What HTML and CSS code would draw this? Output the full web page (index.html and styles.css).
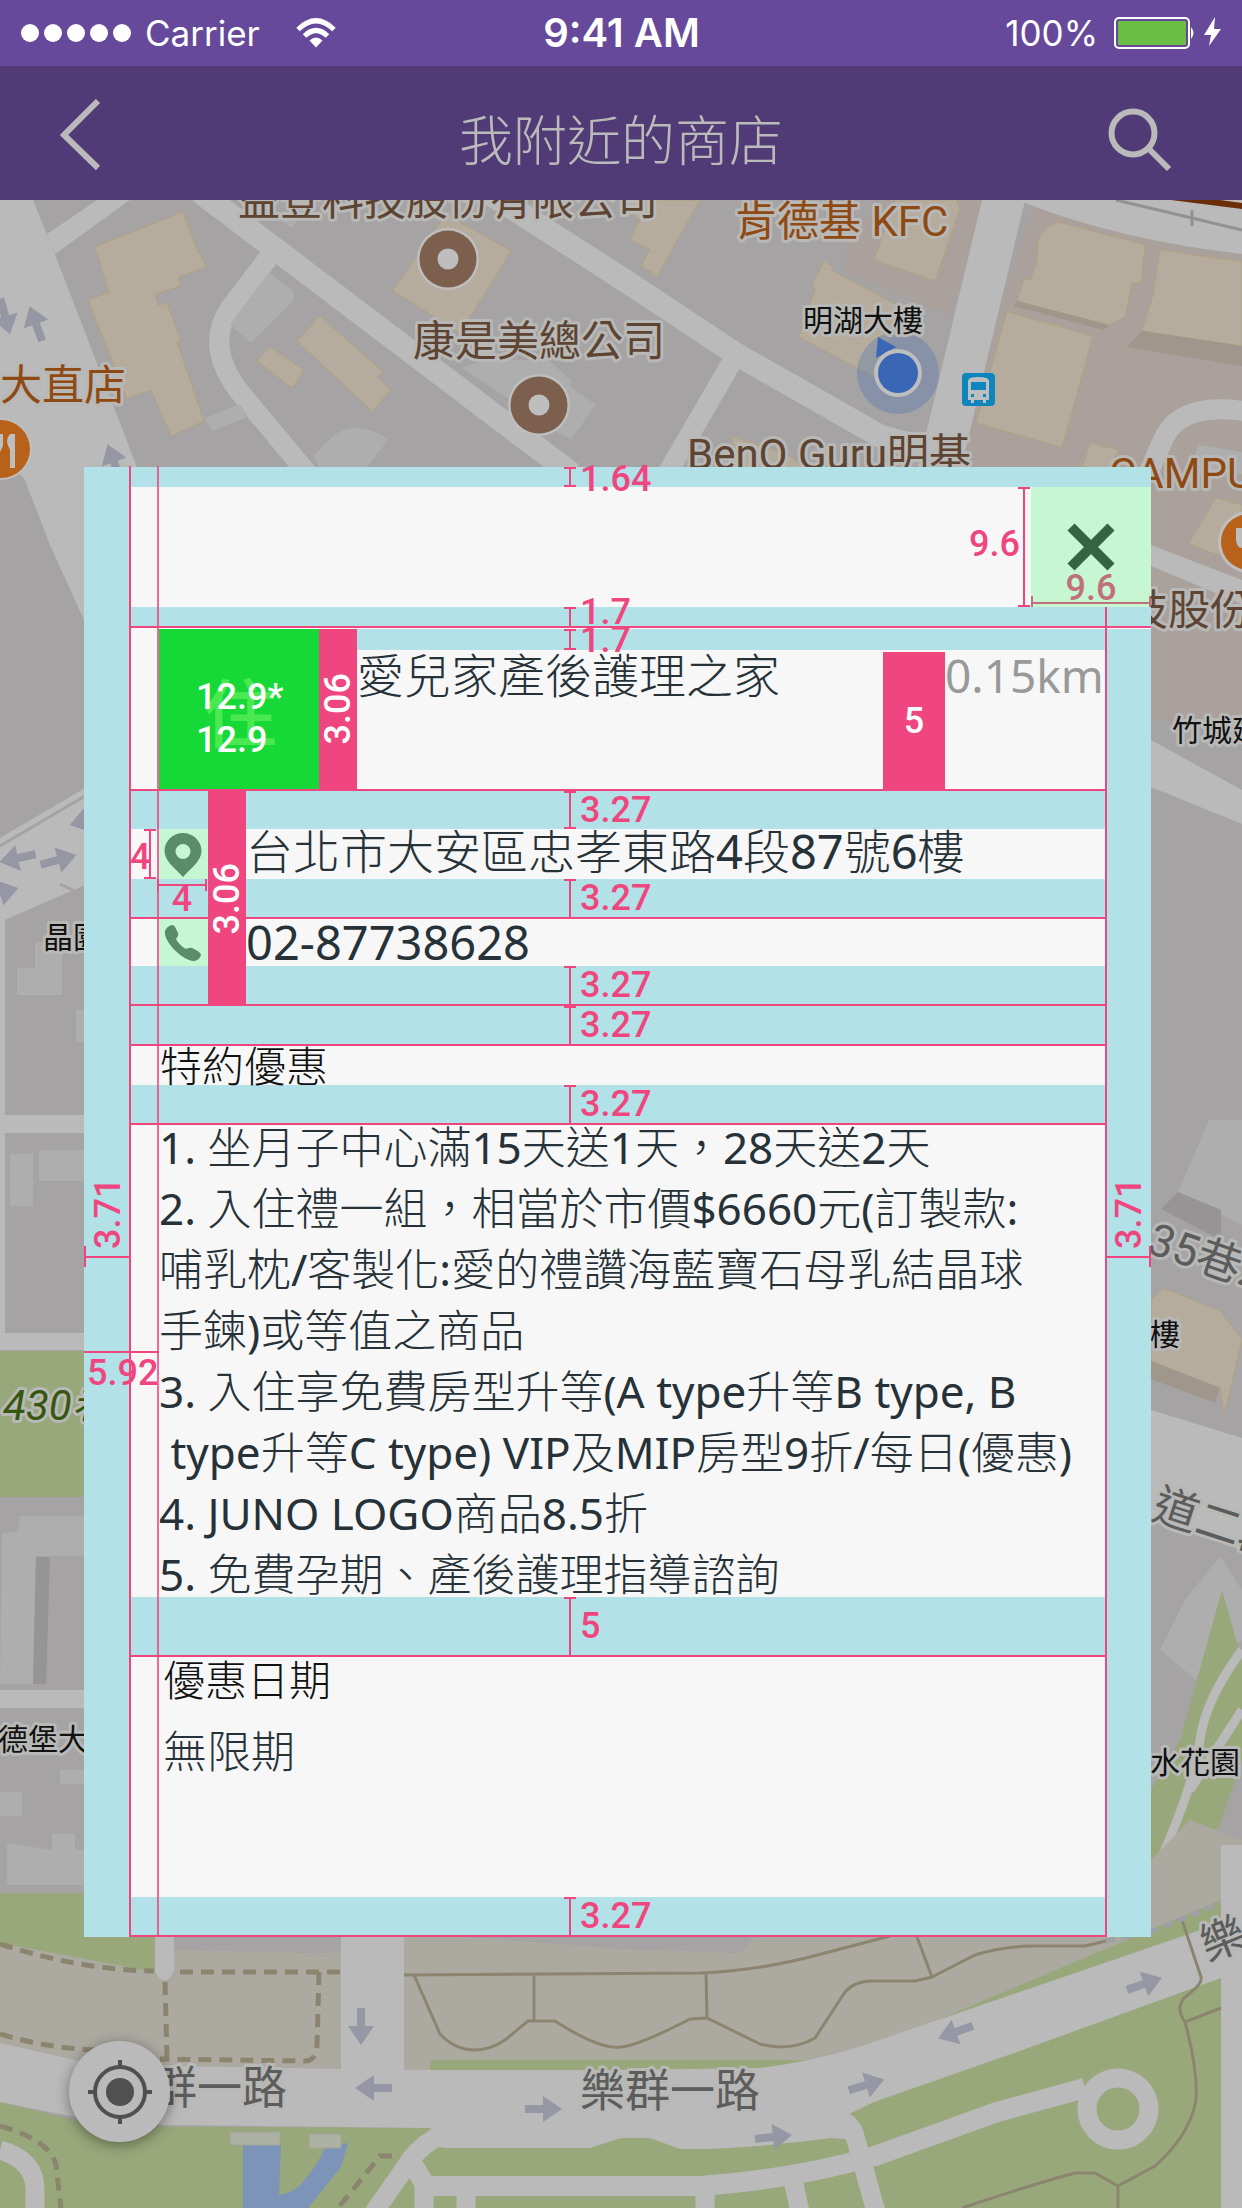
FILE: index.html
```html
<!DOCTYPE html>
<html lang="zh-Hant">
<head>
<meta charset="utf-8">
<meta name="viewport" content="width=device-width, initial-scale=1">
<title>我附近的商店</title>
<link rel="stylesheet" href="styles.css">
</head>
<body>
<div class="status">
  <div class="status-left">
    <span class="dots"><i></i><i></i><i></i><i></i><i></i></span>
    <span>Carrier</span>
    <svg class="wifi" viewBox="0 0 40 30" aria-hidden="true"><g fill="none" stroke="#fff" stroke-width="5"><path d="M2 11.500Q20 -6 38 11.500"/><path d="M8.500 18Q20 7 31.500 18"/></g><path d="M13.500 22.500Q20 16.500 26.500 22.500L20 29.500Z" fill="#fff"/></svg>
  </div>
  <span class="time">9:41 AM</span>
  <div class="status-right">
    <span>100%</span>
    <svg class="battery" viewBox="0 0 108 34" aria-hidden="true"><rect x="1" y="2" width="74" height="30" rx="4" fill="none" stroke="#fff" stroke-width="2"/><rect x="4" y="5" width="68" height="24" rx="1" fill="#6bbd45"/><path d="M77 11q5 6 0 12z" fill="#fff"/><path d="M101 1L90 19h7l-2 11 12-17h-7z" fill="#fff"/></svg>
  </div>
</div>
<header class="topbar">
  <button class="icon-btn back" aria-label="返回"><svg width="42" height="72" viewBox="0 0 42 72"><path d="M38 2L4 36l34 33" fill="none" stroke="#bababa" stroke-width="6"/></svg></button>
  <h1>我附近的商店</h1>
  <button class="icon-btn search" aria-label="搜尋"><svg width="64" height="64" viewBox="0 0 64 64"><circle cx="25" cy="25" r="21.500" fill="none" stroke="#bababa" stroke-width="6"/><path d="M40 40L61 61" stroke="#bababa" stroke-width="6"/></svg></button>
</header>
<main>
  <svg class="map" viewBox="0 200 1242 2008" preserveAspectRatio="xMidYMin slice" aria-hidden="true">
    <defs>
      <path id="arrow" d="M-18 -4H0V-13L19 0L0 13V4H-18Z" fill="#9597a4"/>
      <g id="donut"><circle r="31" fill="#bebebe"/><circle r="28.500" fill="#7d5f4d"/><circle r="10.500" fill="#bebebe"/></g>
    </defs>
    <rect y="200" width="1242" height="2008" fill="#a5a3a4"/>
    <g fill="#aaa19c"><path d="M850 240L880 200H985L950 316L842 270Z"/><path d="M1000 306L1034 205L1242 250V720H1151L1025 467H960Z"/></g>
    <g fill="#bababa">
      <path d="M0 200H33L54 252L137 467L150 620H84L50 545L24 478L0 455Z"/>
      <path d="M47 234L97 200H130L55 254Z"/>
      <path d="M1020 200H1242V254Q1120 240 1025 203Z"/>
      <path d="M0 838L85 788V885L0 922Z"/>
      <path d="M0 920H5V1333H0ZM0 1115H85V1133H0ZM0 1333H85V1350H0ZM0 1690H85V1708H0Z"/>
      <path d="M1151 545L1242 580V604L1151 566ZM1151 740L1242 790V824L1151 787Z"/>
      <path d="M1151 1410L1242 1438V1550L1151 1520Z"/>
    </g>
    <path d="M0 846L85 796M60 884L85 896" fill="none" stroke="#a5a3a4" stroke-width="3"/>
    <g fill="none" stroke="#bababa" stroke-width="23">
      <path d="M200 192L572 474"/>
      <path d="M269 257L230 308Q205 345 238 390L308 474" stroke-width="20"/>
      <path d="M484 190L621 278L736 354L880 436Q910 445 940 450"/>
      <path d="M736 355L667 474" stroke-width="20"/>
      <path d="M1006 190L938 474" stroke-width="42"/>
      <path d="M1250 412Q1180 400 1163 440L1148 474" stroke-width="20"/>
    </g>
    <path d="M1171 200L1242 209V203L1220 200Z" fill="#6b2e08"/>
    <path d="M1116 200L1192 218L1242 230M1192 210V226" fill="none" stroke="#929292" stroke-width="3"/>
    <!-- plain buildings -->
    <g fill="#aeaeae">
      <path d="M269 272L294 292V300L251 343L230 325Z"/><path d="M205 418L240 404L248 417L212 431Z"/>
      <path d="M314 456Q335 430 350 428Q372 426 388 440L362 474H322Z"/>
      <path d="M462 368L485 360H548L571 380V387L596 405L571 439L545 425L528 412Z"/>
      <path d="M273 215H300L292 228ZM1198 445L1242 452V474H1190Z"/>
      <path d="M17 968H35V942H50V952H62V995H17ZM76 1010H85V1042H76Z"/>
      <path d="M10 1154H33V1206H10ZM39 1150H85V1181H39Z"/>
      <path d="M2 1533L18 1532L20 1516H85V1556H36L33 1684H0Z"/>
      <path d="M0 1792H22V1816H0ZM7 1843L52 1850V1834H75V1850H85V1885H7ZM60 1770H85V1784H60Z"/>
      <path d="M1209 1120H1242V1225L1178 1192Z"/><path d="M1185 1600L1220 1556L1242 1590V1640L1196 1680L1160 1650Z"/>
    </g>
    <g fill="#969494"><path d="M1178 1192L1221 1210V1240L1161 1209Z"/><path d="M36 1557H50L46 1684H33Z"/></g>
    <!-- highlighted buildings -->
    <g fill="#b5ac9d" stroke="#b3a27f" stroke-width="1">
      <path d="M95 247L183 212L198 253L201 256L206 267L178 277L181 286L155 294L158 305L167 303L181 341L177 342L204 421L171 436L151 390L127 399L88 300L109 292Z"/>
      <path d="M320 316L383 372L377 377L391 390L372 411L297 341Z"/><path d="M270 347L304 370L292 388L257 361Z"/>
      <path d="M446 214L511 251L460 333L393 291Z"/>
      <path d="M621 206L640 220L630 239L650 250L641 266L657 276L700 200H621Z"/>
      <path d="M895 200H956L960 208L935 281L874 260Z"/>
      <path d="M824 261L833 267L831 270L903 308L874 377L799 337L815 290L812 285Z"/>
      <path d="M1058 222L1145 245L1141 282L1132 283L1125 317L1109 325L1017 301L1024 279L1031 280L1037 261L1038 240Q1045 226 1058 222Z"/>
      <path d="M1160 250L1242 262V346L1142 331L1153 295Z"/>
      <path d="M1007 312L1093 336L1062 447L976 423Z"/>
      <path d="M731 436L790 456L810 474H742Z"/>
      <path d="M1090 443L1118 450L1108 474H1080Z"/>
      <path d="M1216 498L1242 505V560L1212 553L1189 543Z"/>
      <path d="M1163 1288L1220 1311L1242 1340L1224 1415L1220 1388L1151 1361V1300Z"/>
    </g>
    <g fill="#9f978c"><path d="M1017 301L1109 325L1103 330L1014 306Z"/><path d="M1142 331L1242 346V366L1126 347Z"/><path d="M1151 1361L1220 1388L1215 1403L1151 1379Z"/></g>
    <!-- parks and ground -->
    <path d="M0 1351H85V1497H0ZM0 1893H160V1975H0Z" fill="#98a87b"/>
    <path d="M1151 1790L1180 1740L1222 1590L1242 1660V1760L1180 1940H1151Z" fill="#98a87b"/>
    <path d="M1242 1650Q1205 1700 1200 1740T1165 1850T1151 1880M1242 1710L1190 1790" fill="none" stroke="#bababa" stroke-width="9"/>
    <path d="M1151 1860L1190 1820L1242 1840V1937H1151Z" fill="#aca9a1"/>
    <path d="M0 1943L155 1972V1937H1221V2080H0Z" fill="#aca9a1"/>
    <path d="M174 1936H341V1950Q330 1954 310 1953L174 1950ZM470 1937H754L740 1953L621 1949Z" fill="#a5a3a4"/>
    <path d="M0 2102L100 2126L430 2128V2060H843L1221 1900V2208H0Z" fill="#98a87b"/>
    <path d="M0 2043L75 2060L165 2066L341 2069V1937H404V2070H621L760 2068Q810 2062 859 2047L1221 1923V1978L1017 2052L874 2102L843 2117L855 2140L831 2138Q740 2150 680 2149L650 2138H621L590 2148H445L430 2128L165 2125L75 2117L0 2102Z" fill="#bababa"/>
    <path d="M155 1937H174V1970Q170 1980 165 1980Q158 1980 155 1970Z" fill="#bababa"/>
    <g fill="none" stroke="#bababa" stroke-width="19" stroke-linejoin="round">
      <path d="M470 2138H435Q415 2150 405 2168L372 2215"/><path d="M410 2160L426 2186H621H700Q790 2180 875 2156L997 2112L1085 2088" stroke-width="20"/>
      <path d="M424 2186V2210M466 2186V2210M705 2186V2210M793 2180L800 2212M838 2120Q852 2122 856 2140L876 2212"/>
      <circle cx="1118" cy="2109" r="31"/><path d="M0 2150Q35 2160 35 2190V2210"/>
    </g>
    <path d="M243 2144H281L279 2195Q295 2192 302 2183Q318 2165 325 2147L348 2143L341 2167L308 2208H243Z" fill="#7b94b8"/>
    <path d="M230 2132H280V2145H230ZM309 2134H341V2148H309Z" fill="#adb1a3" stroke="#a0a294"/>
    <g fill="none" stroke="#8b856f" stroke-width="5" stroke-dasharray="13 8">
      <path d="M0 1944Q80 1970 154 1971M180 1972H340M319 1972L317 2045Q316 2061 305 2061L160 2059M165 1982L167 2058M0 2034Q50 2049 100 2050M0 2126Q50 2140 56 2165L61 2208M392 2156H380L338 2208"/>
    </g>
    <g fill="none" stroke="#8b856f" stroke-width="3" stroke-linejoin="round">
      <path d="M404 1975L700 1973Q760 1971 825 1953Q860 1944 890 1936M414 1975L440 2034Q455 2050 475 2050Q490 2050 505 2040L528 2021H555Q600 2050 621 2047Q640 2045 690 2019L707 2018L760 2044Q790 2052 815 2038L845 1992Q855 1980 875 1981H915L932 1977L975 1955Q1000 1947 1030 1946H1085L1110 1940M534 1975V2020M706 1973L707 2018M917 1937L932 1977"/>
      <path d="M1182 1920L1201 1977Q1203 1984 1185 1997Q1175 2008 1185 2022L1221 2008M1185 2022Q1198 2070 1196 2100Q1190 2135 1155 2166L1118 2186L1095 2173H1075Q1030 2185 962 2208M1118 2186V2208"/>
    </g>
    <path d="M1106 1941L1150 1932L1221 1903" fill="none" stroke="#9da0a5" stroke-width="5" stroke-dasharray="9 6"/>
    <rect x="1221" y="1845" width="21" height="363" fill="#bababa"/>
    <!-- traffic arrows -->
    <use href="#arrow" transform="translate(36 324) rotate(-110)"/><use href="#arrow" transform="translate(5 316) rotate(75)"/>
    <use href="#arrow" transform="translate(114 462) rotate(-110)"/><use href="#arrow" transform="translate(18 858) rotate(168)"/>
    <use href="#arrow" transform="translate(58 860) rotate(-15)"/><use href="#arrow" transform="translate(0 893) rotate(-15)"/>
    <use href="#arrow" transform="translate(88 820) rotate(165)"/>
    <use href="#arrow" transform="translate(361 2026) rotate(90)"/><use href="#arrow" transform="translate(374 2088) rotate(180)"/>
    <use href="#arrow" transform="translate(543 2109)"/><use href="#arrow" transform="translate(773 2137) rotate(-6)"/>
    <use href="#arrow" transform="translate(866 2085) rotate(-17)"/><use href="#arrow" transform="translate(956 2032) rotate(160)"/>
    <use href="#arrow" transform="translate(1144 1984) rotate(-19)"/>
    <!-- places -->
    <use href="#donut" x="448" y="259"/><use href="#donut" x="539" y="405"/>
    <circle cx="1" cy="449" r="31" fill="#bebebe"/><circle cx="1" cy="449" r="29" fill="#b8611a"/><path d="M10 468V450Q4 440 10 434H15V468ZM-4 434H3V446L0 452V468H-4Z" fill="#bebebe"/>
    <circle cx="1249" cy="542" r="31" fill="#bebebe"/><circle cx="1249" cy="542" r="28" fill="#b8611a"/><path d="M1236 528V540Q1237 548 1242 548V528Z" fill="#bebebe"/>
    <circle cx="898" cy="373" r="41" fill="#3a67b5" opacity=".28"/><path d="M878 337L896 347L876 358Z" fill="#3a67b5"/><circle cx="898" cy="373" r="24" fill="#bebebe"/><circle cx="898" cy="373" r="20" fill="#3a67b5"/>
    <rect x="962" y="373" width="33" height="33" rx="4" fill="#0e86bd"/><path d="M968 400V381Q968 377 978 377Q989 377 989 381V400H986V403H983V400H974V403H971V400ZM971 382V390H986V382ZM971 394V397H974V394ZM983 394V397H986V394Z" fill="#bebebe" fill-rule="evenodd"/>
    <g class="place brown"><text x="238" y="215">益登科技股份有限公司</text><text x="413" y="356">康是美總公司</text><text x="687" y="469">BenQ Guru明基</text><text x="1126" y="625">技股份</text></g>
    <g class="place orange"><text x="735" y="236">肯德基 KFC</text><text x="0" y="400">大直店</text><text x="1109" y="488">CAMPU</text></g>
    <g class="place black"><text x="803" y="331">明湖大樓</text><text x="1172" y="741">竹城建</text><text x="43" y="948">晶園</text><text x="1150" y="1345">樓</text><text x="-2" y="1750">德堡大</text><text x="1150" y="1773">水花園</text></g>
    <g class="place road"><text x="152" y="2104">群一路</text><text x="580" y="2107">樂群一路</text><text transform="translate(1145 1252) rotate(19)">35巷2</text><text transform="translate(1150 1518) rotate(18)">道二段</text><text transform="translate(1208 1962) rotate(-22)">樂</text></g>
    <g class="place park"><text x="3" y="1420">430巷</text></g>
  </svg>

  <article class="card">
    <div class="band band-top"><i class="mark"></i><span class="label">1.64</span></div>
    <div class="head">
      <span class="label">9.6</span><i class="mark"></i>
      <button class="close" aria-label="關閉"><svg width="48" height="48" viewBox="0 0 48 48"><path d="M4 4L44 44M44 4L4 44" stroke="#356540" stroke-width="10"/></svg><span class="close-size">9.6</span></button>
    </div>
    <div class="content">
      <div class="band line band-head"><i class="mark"></i><span class="label">1.7</span></div>
      <div class="summary">
        <div class="badge"><b>住</b><span>12.9*<br>12.9</span></div>
        <div class="gap-bar"><span class="vertical">3.06</span></div>
        <div class="summary-main">
          <div class="band"><i class="mark"></i><span class="label">1.7</span></div>
          <div class="summary-row"><h2>愛兒家產後護理之家</h2><div class="gap-five">5</div><span class="distance">0.15km</span></div>
        </div>
      </div>
      <div class="detail">
        <div class="contact">
          <div class="band"><i class="mark"></i><span class="label">3.27</span></div>
          <div class="contact-row address"><span class="icon-box"><svg width="50" height="50" viewBox="0 0 50 50"><path fill-rule="evenodd" d="M25 4C35 4 43.500 12 43.500 22C43.500 32 33 39 25 48C17 39 6.500 32 6.500 22C6.500 12 15 4 25 4ZM25 15A7.500 7.500 0 1 0 25 30A7.500 7.500 0 1 0 25 15Z" fill="#5a8c68"/></svg></span><span class="value">台北市大安區忠孝東路4段87號6樓</span></div>
          <div class="band line"><i class="mark"></i><span class="label">3.27</span></div>
          <div class="contact-row phone"><span class="icon-box"><svg width="50" height="50" viewBox="0 0 50 50"><path d="M14 7Q9 8 7 13C5 22 22 41 35 43Q41 43 43 37Q43 34 34 30Q32 29 28 31C24 29 20 25 18 21Q21 17 20 15L17 9Q16 7 14 7Z" fill="#5a8c68"/></svg></span><span class="value">02-87738628</span></div>
          <div class="band line"><i class="mark"></i><span class="label">3.27</span></div>
          <div class="gap-bar"><span class="vertical">3.06</span></div>
          <div class="size-v"><span class="label">4</span><i class="mark"></i></div>
          <div class="size-h"><span class="label">4</span></div>
        </div>
        <div class="band line"><i class="mark"></i><span class="label">3.27</span></div>
        <h3>特約優惠</h3>
        <div class="band line"><i class="mark"></i><span class="label">3.27</span></div>
        <ol class="offers">
          <li>1. 坐月子中心滿15天送1天，28天送2天</li>
          <li>2. 入住禮一組，相當於市價$6660元(訂製款:<br>哺乳枕/客製化:愛的禮讚海藍寶石母乳結晶球<br>手鍊)或等值之商品</li>
          <li>3. 入住享免費房型升等(A type升等B type, B<br> type升等C type) VIP及MIP房型9折/每日(優惠)</li>
          <li>4. JUNO LOGO商品8.5折</li>
          <li>5. 免費孕期、產後護理指導諮詢</li>
        </ol>
        <div class="band line band-five"><i class="mark"></i><span class="label">5</span></div>
        <div class="dates"><h3>優惠日期</h3><p>無限期</p></div>
        <div class="band line"><i class="mark"></i><span class="label">3.27</span></div>
      </div>
    </div>
    <div class="rail rail-left"><span class="vertical">3.71</span></div>
    <div class="rail rail-right"><span class="vertical">3.71</span></div>
    <div class="rail-inset"><span class="label">5.92</span></div>
  </article>

  <button class="locate" aria-label="定位"><svg width="66" height="66" viewBox="0 0 66 66"><circle cx="33" cy="33" r="14" fill="#505050"/><circle cx="33" cy="33" r="25" fill="none" stroke="#505050" stroke-width="4"/><path d="M33 1V9M33 57V65M1 33H9M57 33H65" stroke="#505050" stroke-width="4"/></svg></button>
</main>
</body>
</html>
```
FILE: styles.css
```css
* { box-sizing: border-box; }
:root {
  --pink: #ef467f;
  --teal: #b2e1e8;
  --paper: #f7f7f7;
  --ink: #263238;
}
body {
  margin: 0;
  min-height: 100vh;
  display: flex;
  flex-direction: column;
  font-family: "Noto Sans", "Noto Sans CJK TC Light", "Noto Sans CJK TC", sans-serif;
  color: var(--ink);
}
button { border: 0; padding: 0; background: none; display: flex; align-items: center; justify-content: center; }
h1, h2, h3, p, ol { margin: 0; padding: 0; font-weight: 300; }
svg { display: block; }

.status {
  display: grid;
  grid-template-columns: 1fr auto 1fr;
  align-items: center;
  height: 66px;
  padding: 0 20px 0 21px;
  background: #66499a;
  color: #fff;
  font: 400 35px/44px Inter, sans-serif;
}
.status-left, .status-right { display: flex; align-items: center; }
.status-right { justify-content: flex-end; gap: 16px; }
.dots { display: flex; gap: 5px; margin-right: 14px; }
.dots i { width: 18px; height: 18px; border-radius: 50%; background: #fff; }
.wifi { width: 40px; height: 30px; margin-left: 36px; }
.battery { width: 108px; height: 34px; }
.time { font-weight: 600; font-size: 40px; }

.topbar {
  display: grid;
  grid-template-columns: 1fr auto 1fr;
  align-items: center;
  height: 134px;
  padding: 14px 70px 0 60px;
  background: #513b77;
  color: #bababa;
}
.topbar h1 { padding-left: 10px; font-size: 54px; line-height: 72px; }
.icon-btn { justify-self: start; }
.back { padding-bottom: 10px; }
.search { justify-self: end; }

main {
  position: relative;
  flex: 1;
  padding: 267px 91px 270px 84px;
  background: #a5a3a4;
  overflow: hidden;
}
.map { position: absolute; inset: 0; width: 100%; height: 100%; }
.place { font-family: Roboto, "Noto Sans CJK TC", sans-serif; font-size: 42px; stroke: #b8b8b6; stroke-width: 6px; stroke-linejoin: round; paint-order: stroke; }
.brown { fill: #5d4433; }
.orange { fill: #8f4a14; }
.black { fill: #111; font-size: 30px; }
.road { fill: #5c5c5c; font-size: 45px; }
.park { fill: #36570f; font-style: italic; }

.card {
  position: relative;
  border-left: 47px solid var(--teal);
  background: var(--paper);
}
.card::before, .card::after {
  content: "";
  position: absolute;
  top: -1px;
  bottom: 0;
  left: -2px;
  width: 2px;
  background: var(--pink);
}
.card::after { left: 26px; opacity: .8; }

.label, .vertical, .close-size, .gap-five, .badge span {
  font: 500 36px/36px Roboto, sans-serif;
  color: var(--pink);
}
.vertical { writing-mode: vertical-rl; transform: rotate(180deg); }
.band {
  display: flex;
  align-items: center;
  gap: 4px;
  height: 38px;
  padding-left: 433px;
  background: var(--teal);
}
.line { height: 40px; border-bottom: 2px solid var(--pink); }
.mark {
  align-self: stretch;
  width: 12px;
  border: solid var(--pink);
  border-width: 2px 0;
  background: linear-gradient(var(--pink), var(--pink)) center / 2px 100% no-repeat;
}
.line .mark { border-bottom: 0; }
.band-top { height: 20px; }
.band-top .label { padding-top: 4px; }
.band-head { height: 21px; }
.band-head .label { margin-top: -10px; }

.head { display: flex; justify-content: flex-end; align-items: center; height: 120px; }
.head .label { margin: -6px -2px 0 0; }
.head .mark { margin-right: 1px; }
.close { position: relative; width: 120px; height: 120px; background: #c6f7d2; }
.close-size {
  position: absolute;
  inset: auto 0 3px;
  line-height: 28px;
  color: #c07079;
  border-bottom: 2px solid #c07079;
}
.close-size::before {
  content: "";
  position: absolute;
  inset: auto 0 -6px;
  height: 12px;
  border: solid #c07079;
  border-width: 0 2px;
}

.content { position: relative; }
.content::after {
  content: "";
  position: absolute;
  top: 0;
  bottom: 0;
  right: 44px;
  width: 2px;
  background: var(--pink);
}
.summary { display: flex; height: 161px; padding: 1px 0 0 28px; }
.badge { position: relative; display: flex; align-items: center; width: 160px; padding: 20px 0 0 37px; background: #16d937; }
.badge b { position: absolute; inset: 0; font-size: 74px; line-height: 160px; font-weight: 500; text-align: center; color: #4ae950; padding-left: 2px; font-family: "Noto Sans CJK TC", sans-serif; }
.badge span { position: relative; line-height: 43px; color: #fff; }
.gap-bar { display: flex; align-items: center; justify-content: center; width: 38px; background: var(--pink); }
.gap-bar .vertical { color: #fff; }
.summary-main { flex: 1; display: flex; flex-direction: column; }
.summary-main .band { height: 21px; padding-left: 207px; }
.summary-row { flex: 1; display: flex; border-right: 44px solid var(--teal); }
.summary-row h2 { flex: 1; font-size: 47px; line-height: 50px; }
.gap-five { display: flex; align-items: center; justify-content: center; width: 62px; margin-top: 2px; background: var(--pink); color: #fff; }
.distance { width: 162px; font-size: 46px; line-height: 50px; color: #999; }

.detail { border-right: 44px solid var(--teal); }
.contact { position: relative; border-top: 2px solid var(--pink); }
.contact-row { display: flex; gap: 38px; height: 50px; padding-left: 27px; font-size: 47px; line-height: 44px; }
.phone { height: 47px; line-height: 47px; }
.icon-box { width: 50px; height: 100%; display: flex; align-items: center; justify-content: center; background: #c6f7d2; }
.contact .gap-bar { position: absolute; top: 0; bottom: 0; left: 77px; }
.size-v { position: absolute; top: 38px; left: -1px; height: 50px; display: flex; align-items: center; }
.size-v .label { padding-top: 6px; }
.size-v .mark { width: 12px; margin-left: -6px; }
.size-h { position: absolute; top: 88px; left: 26px; width: 50px; text-align: center; }
.size-h::before { content: ""; display: block; height: 12px; margin-bottom: -10px; border: solid var(--pink); border-width: 0 2px; background: linear-gradient(var(--pink), var(--pink)) center / 100% 2px no-repeat; }
.size-h .label { display: block; }

h3 { padding-left: 29px; font-size: 42px; line-height: 39px; color: #111; }
.offers {
  margin: -8px 0;
  padding-left: 28px;
  list-style: none;
  font-size: 44px;
  font-weight: 400;
  line-height: 61px;
}
.offers li { white-space: pre; }
.band-five { height: 60px; }
.dates { min-height: 240px; }
.dates h3 { padding-left: 32px; line-height: 46px; }
.dates p { padding: 20px 0 0 32px; font-size: 44px; line-height: 56px; }

.rail { position: absolute; top: 712px; height: 84px; display: flex; justify-content: center; }
.rail::after { content: ""; position: absolute; inset: 67px 0 0; height: 21px; background: linear-gradient(var(--pink), var(--pink)) center / 100% 2px no-repeat; }
.rail-left { left: -47px; width: 47px; }
.rail-right { right: 0; width: 44px; }
.rail-left::after { border-left: 2px solid var(--pink); }
.rail-right::after { border-right: 2px solid var(--pink); }
.rail .vertical { height: 70px; }
.rail-inset { position: absolute; top: 884px; left: -47px; width: 75px; padding-left: 3px; border-top: 2px solid var(--pink); }
.rail-inset .label { display: block; padding-top: 2px; }

.locate {
  position: absolute;
  left: 69px;
  bottom: 66px;
  width: 101px;
  height: 101px;
  border-radius: 50%;
  background: #bababa;
  box-shadow: 0 3px 14px rgba(0, 0, 0, .4);
}
```
